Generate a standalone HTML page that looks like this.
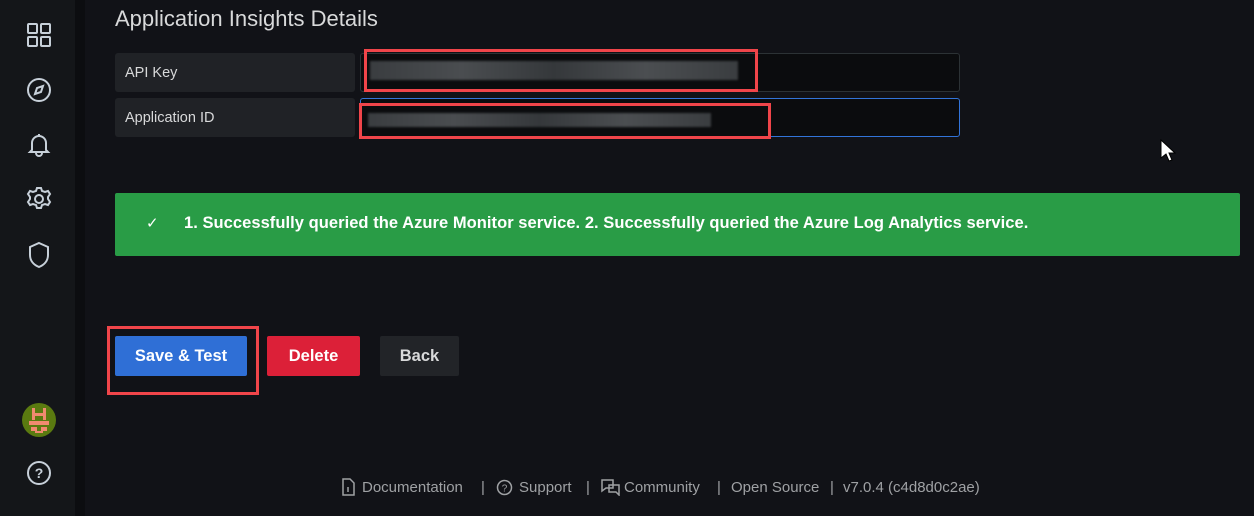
<!DOCTYPE html>
<html><head><style>
*{margin:0;padding:0;box-sizing:border-box}
body{width:1254px;height:516px;background:#111217;font-family:"Liberation Sans",sans-serif;position:relative;overflow:hidden;color:#d8d9da}
.abs{position:absolute}
.side{left:0;top:0;width:75px;height:516px;background:#141619}
.strip{left:75px;top:0;width:10px;height:516px;background:#0c0d10}
.lbl{background:#202226;border-radius:3px;font-size:14.5px;padding-left:10px;display:flex;align-items:center;color:#d8d9da}
.inp{background:#0b0c0e;border:1px solid #2c3235;border-radius:3px}
.red{border:3px solid #f0454a}
.blur{background:linear-gradient(90deg,#3a3d40,#4a4d50,#35383b,#4b4e51,#3a3d40);filter:blur(1px)}
.btn{display:flex;align-items:center;justify-content:center;font-size:16.5px;font-weight:bold;color:#fff;border-radius:2px}
.ic{stroke:#c7d0d9;fill:none;stroke-width:2}
.ft{position:absolute;top:479px;font-size:15px;color:#9fa1a4;white-space:nowrap}
.fi{stroke:#9fa1a4;fill:none;stroke-width:1.5}
</style></head><body>
<div class="abs side"></div><div class="abs strip"></div>
<svg class="abs" style="left:26px;top:22px" width="26" height="26" viewBox="0 0 26 26"><g class="ic"><rect x="2" y="2" width="9" height="9" rx="1"/><rect x="15" y="2" width="9" height="9" rx="1"/><rect x="2" y="15" width="9" height="9" rx="1"/><rect x="15" y="15" width="9" height="9" rx="1"/></g></svg>
<svg class="abs" style="left:26px;top:77px" width="26" height="26" viewBox="0 0 26 26"><g class="ic"><circle cx="13" cy="13" r="11"/><path d="M9 17l2-6 6-2-2 6z"/></g></svg>
<svg class="abs" style="left:26px;top:131px" width="26" height="26" viewBox="0 0 26 26"><g class="ic"><path d="M6 19V12a7 7 0 0114 0v7l2 2H4z"/><path d="M10 22a3 3 0 006 0"/><path d="M13 3v2"/></g></svg>
<svg class="abs" style="left:26px;top:186px" width="26" height="26" viewBox="0 0 26 26"><g class="ic"><circle cx="13" cy="13" r="4"/><path d="M11 2h4l1 3 3 1 3-1 2 3-2 3v2l2 3-2 3-3-1-3 1-1 3h-4l-1-3-3-1-3 1-2-3 2-3v-2l-2-3 2-3 3 1 3-1z"/></g></svg>
<svg class="abs" style="left:26px;top:241px" width="26" height="28" viewBox="0 0 26 28"><path class="ic" d="M13 2l9 4v8c0 6-4 10-9 12-5-2-9-6-9-12V6z"/></svg>
<svg class="abs" style="left:21px;top:402px" width="36" height="36" viewBox="0 0 36 36"><circle cx="18" cy="18" r="17" fill="#5a7a10"/><g fill="#f08a70"><rect x="11" y="6" width="3" height="12"/><rect x="22" y="6" width="3" height="12"/><rect x="11" y="11" width="14" height="3"/><rect x="8" y="19" width="20" height="4"/><rect x="10" y="25" width="6" height="4"/><rect x="20" y="25" width="6" height="4"/><rect x="14" y="29" width="8" height="2"/></g></svg>
<svg class="abs" style="left:26px;top:460px" width="26" height="26" viewBox="0 0 26 26"><circle class="ic" cx="13" cy="13" r="11"/><text x="13" y="18" font-size="14" font-weight="bold" fill="#c7d0d9" text-anchor="middle" font-family="Liberation Sans">?</text></svg>

<div class="abs" style="left:115px;top:6px;font-size:22px;color:#d8d9da">Application Insights Details</div>
<div class="abs lbl" style="left:115px;top:53px;width:240px;height:39px">API Key</div>
<div class="abs lbl" style="left:115px;top:98px;width:240px;height:39px">Application ID</div>
<div class="abs inp" style="left:360px;top:53px;width:600px;height:39px"></div>
<div class="abs inp" style="left:360px;top:98px;width:600px;height:39px;border-color:#3274d9"></div>
<div class="abs blur" style="left:370px;top:61px;width:368px;height:19px"></div>
<div class="abs blur" style="left:368px;top:113px;width:343px;height:14px"></div>
<div class="abs red" style="left:364px;top:49px;width:394px;height:43px"></div>
<div class="abs red" style="left:359px;top:103px;width:412px;height:36px"></div>

<svg class="abs" style="left:1160px;top:139px" width="16" height="24" viewBox="0 0 16 24"><path d="M1 1v18l5-4 3 7 3-1-3-7h6z" fill="#fff" stroke="#000"/></svg>

<div class="abs" style="left:115px;top:193px;width:1125px;height:63px;background:#299c46;border-radius:2px"></div>
<div class="abs" style="left:146px;top:214px;font-size:15px;color:#fff">✓</div>
<div class="abs" style="left:184px;top:214px;font-size:16.5px;font-weight:bold;color:#fff;letter-spacing:0.05px">1. Successfully queried the Azure Monitor service. 2. Successfully queried the Azure Log Analytics service.</div>

<div class="abs btn" style="left:115px;top:336px;width:132px;height:40px;background:#2f6fd6">Save &amp; Test</div>
<div class="abs btn" style="left:267px;top:336px;width:93px;height:40px;background:#dc2038">Delete</div>
<div class="abs btn" style="left:380px;top:336px;width:79px;height:40px;background:#222428;color:#d8d9da">Back</div>
<div class="abs red" style="left:107px;top:326px;width:152px;height:69px"></div>

<svg class="abs" style="left:341px;top:478px" width="14" height="18" viewBox="0 0 14 18"><path class="fi" d="M2 1h7l4 4v12H2z"/><path class="fi" d="M7 9v5"/></svg>
<div class="ft" style="left:362px">Documentation</div>
<div class="ft" style="left:481px">|</div>
<svg class="abs" style="left:496px;top:479px" width="17" height="17" viewBox="0 0 17 17"><circle class="fi" cx="8.5" cy="8.5" r="7"/><text x="8.5" y="12.5" font-size="10" fill="#9fa1a4" text-anchor="middle" font-family="Liberation Sans">?</text></svg>
<div class="ft" style="left:519px">Support</div>
<div class="ft" style="left:586px">|</div>
<svg class="abs" style="left:601px;top:479px" width="19" height="17" viewBox="0 0 19 17"><path class="fi" d="M1 1h11v8H5l-4 3z"/><path class="fi" d="M8 6h10v10l-3-3H8z"/></svg>
<div class="ft" style="left:624px">Community</div>
<div class="ft" style="left:717px">|</div>
<div class="ft" style="left:731px">Open Source</div>
<div class="ft" style="left:830px">|</div>
<div class="ft" style="left:843px">v7.0.4 (c4d8d0c2ae)</div>
</body></html>
